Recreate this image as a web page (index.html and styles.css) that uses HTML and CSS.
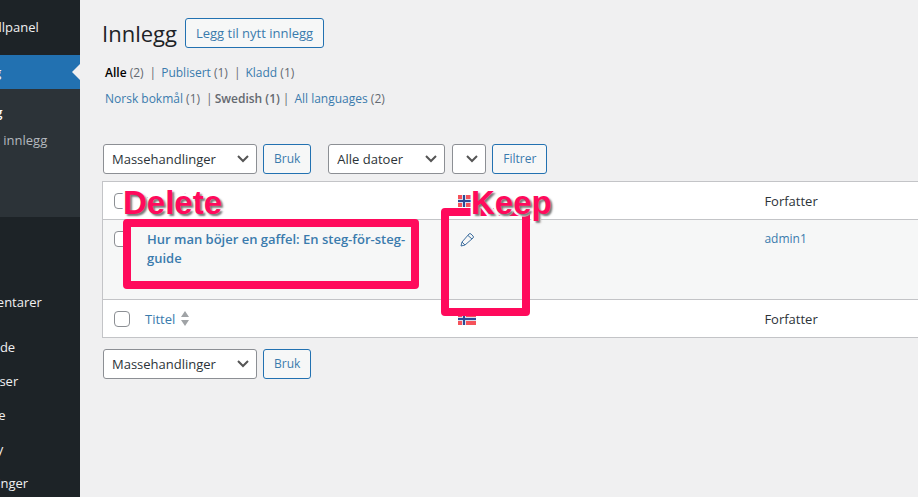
FILE: index.html
```html
<!DOCTYPE html>
<html lang="nb">
<head>
	<meta charset="UTF-8">
	<title>Innlegg</title>
	<link rel="stylesheet" href="styles.css">
</head>
<body>

<svg class="sprite" aria-hidden="true">
	<symbol id="flag-no" viewBox="0 0 18 12">
		<path fill="#f5525a" d="M0 0h18v12H0z"/>
		<path fill="#d9dcec" d="M4 0h4v12H4zM0 4h18v4H0z"/>
		<path fill="#2c4a94" d="M5 0h2v12H5zM0 5h18v2H0z"/>
	</symbol>
	<symbol id="sort" viewBox="0 0 8 15">
		<path fill="#a0a3a6" d="M0 6l4-6 4 6zM0 9l4 6 4-6z"/>
	</symbol>
</svg>

<nav class="menu">
	<ul>
		<li><a href="#">Kontrollpanel</a></li>
		<li class="menu-gap"></li>
		<li class="current">
			<a href="#">Innlegg</a>
			<ul class="submenu">
				<li class="active"><a href="#">Alle innlegg</a></li>
				<li><a href="#">Legg til nytt innlegg</a></li>
				<li><a href="#">Kategorier</a></li>
				<li><a href="#">Stikkord</a></li>
			</ul>
		</li>
		<li><a href="#">Media</a></li>
		<li><a href="#">Sider</a></li>
		<li><a href="#">Kommentarer</a></li>
		<li class="menu-gap"></li>
		<li><a href="#">Utseende</a></li>
		<li><a href="#">Utvidelser</a></li>
		<li><a href="#">Brukere</a></li>
		<li><a href="#">Verktøy</a></li>
		<li><a href="#">Innstillinger</a></li>
	</ul>
</nav>

<main class="content">
	<header class="heading">
		<h1>Innlegg</h1>
		<a class="button add-new" href="#">Legg til nytt innlegg</a>
	</header>

	<ul class="views">
		<li><a class="selected" href="#">Alle</a> (2)</li>
		<li><a href="#">Publisert</a> (1)</li>
		<li><a href="#">Kladd</a> (1)</li>
	</ul>
	<ul class="views languages">
		<li><a href="#">Norsk bokmål</a> (1)</li>
		<li class="chosen">Swedish (1)</li>
		<li><a href="#">All languages</a> (2)</li>
	</ul>

	<div class="tablenav top">
		<select class="bulk" aria-label="Velg massehandling"><option>Massehandlinger</option></select>
		<button class="button" type="button">Bruk</button>
		<select class="dates" aria-label="Filtrer etter dato"><option>Alle datoer</option></select>
		<select class="empty" aria-label="Filtrer etter kategori"><option></option></select>
		<button class="button" type="button">Filtrer</button>
	</div>

	<table class="posts">
		<thead>
			<tr>
				<th class="col-check"><input type="checkbox" aria-label="Velg alle"></th>
				<th class="col-title"><a class="sortable" href="#">Tittel <svg class="sort"><use href="#sort"/></svg></a></th>
				<th class="col-lang"><svg class="flag" role="img" aria-label="Norsk bokmål"><use href="#flag-no"/></svg></th>
				<th>Forfatter</th>
			</tr>
		</thead>
		<tbody>
			<tr>
				<td class="col-check"><input type="checkbox" aria-label="Velg innlegg"></td>
				<td class="col-title"><a class="row-title" href="#">Hur man böjer en gaffel: En steg-för-steg-guide</a></td>
				<td class="col-lang">
					<a href="#" aria-label="Rediger oversettelsen">
						<svg class="pencil" viewBox="0 0 16 16"><path d="M2 14l1-4 7-8q1-1 2 0l2 2q1 1 0 2l-8 7zM9 3.500l4 3.500M3 10l3 3"/></svg>
					</a>
				</td>
				<td><a href="#">admin1</a></td>
			</tr>
		</tbody>
		<tfoot>
			<tr>
				<th class="col-check"><input type="checkbox" aria-label="Velg alle"></th>
				<th class="col-title"><a class="sortable" href="#">Tittel <svg class="sort"><use href="#sort"/></svg></a></th>
				<th class="col-lang"><svg class="flag" role="img" aria-label="Norsk bokmål"><use href="#flag-no"/></svg></th>
				<th>Forfatter</th>
			</tr>
		</tfoot>
	</table>

	<div class="tablenav bottom">
		<select class="bulk" aria-label="Velg massehandling"><option>Massehandlinger</option></select>
		<button class="button" type="button">Bruk</button>
	</div>

	<div class="mark mark-delete"></div>
	<div class="mark mark-keep"></div>
	<span class="note note-delete">Delete</span>
	<span class="note note-keep">Keep</span>
</main>

</body>
</html>
```

FILE: styles.css
```css
* {
	box-sizing: border-box;
}

html, body {
	height: 100%;
}

body {
	display: flex;
	margin: 0;
	overflow: hidden;
	background: #f0f0f1;
	color: #3c434a;
	font-family: "Open Sans", sans-serif;
	font-size: 12px;
	line-height: 18px;
}

ul, h1 {
	margin: 0;
	padding: 0;
	list-style: none;
}

a {
	color: #3a7bad;
	text-decoration: none;
}

.sprite {
	display: none;
}

/* admin menu, partly scrolled out to the left */
.menu {
	flex: none;
	width: 160px;
	margin-left: -80px;
	padding-top: 10px;
	background: #1d2327;
	font-size: 13px;
}

.menu a {
	display: block;
	padding: 8px 0 8px 37px;
	color: #f0f0f1;
	white-space: nowrap;
}

.menu-gap {
	height: 11px;
}

.current {
	position: relative;
}

.current > a {
	background: #2271b1;
	color: #fff;
}

/* arrow pointing at the page */
.current::after {
	content: "";
	position: absolute;
	top: 9px;
	right: 0;
	border: 8px solid transparent;
	border-right-color: #f0f0f1;
}

.submenu {
	padding: 9px 0 7px;
	background: #2c3338;
}

.menu .submenu a {
	padding: 5px 0 5px 10px;
	color: #b4b9be;
}

.menu .submenu .active a {
	color: #fff;
	font-weight: 600;
}

/* page */
.content {
	position: relative;
	flex: 1;
	min-width: 0;
	padding: 18px 0 0 22px;
}

.heading {
	display: flex;
	align-items: center;
	gap: 8px;
}

h1 {
	color: #1d2327;
	font-size: 22px;
	font-weight: 400;
	line-height: 30px;
}

.button {
	height: 30px;
	padding: 0 10px;
	border: 1px solid #2271b1;
	border-radius: 3px;
	background: #f6f7f7;
	color: #3a7bad;
	font: 12px/28px "Open Sans", sans-serif;
}

.add-new {
	font-size: 13px;
}

.views {
	display: flex;
	padding: 16px 0 0 3px;
	color: #646970;
}

.languages {
	padding-top: 8px;
}

.views li + li::before {
	content: "|";
	padding: 0 5px 0 6px;
}

.views .selected {
	color: #000;
	font-weight: 600;
}

.views .chosen {
	font-weight: 600;
}

.views .chosen::before,
.views .chosen + li::before {
	font-weight: 400;
}

.languages .chosen::before {
	padding-right: 2px;
}

.languages .chosen + li::before {
	padding-left: 3px;
}

.tablenav {
	display: flex;
	gap: 6px;
	padding-left: 1px;
}

.top {
	margin: 36px 0 7px;
}

.bottom {
	margin-top: 11px;
}

select {
	height: 30px;
	padding: 0 24px 0 8px;
	appearance: none;
	border: 1px solid #8c8f94;
	border-radius: 3px;
	background: #fff url("data:image/svg+xml,%3Csvg xmlns='http://www.w3.org/2000/svg' viewBox='0 0 12 8'%3E%3Cpath d='M1 1l5 5 5-5' fill='none' stroke='%23555' stroke-width='2'/%3E%3C/svg%3E") no-repeat right 7px center / 12px 8px;
	color: #2c3338;
	font: 13px "Open Sans", sans-serif;
}

.bulk {
	width: 154px;
}

.dates {
	width: 117px;
	margin-left: 11px;
}

.empty {
	width: 34px;
	margin-left: 1px;
}

.posts {
	width: 100%;
	table-layout: fixed;
	border: solid #c3c4c7;
	border-width: 1px 0 1px 1px;
	border-spacing: 0;
	background: #fff;
}

.posts th, .posts td {
	padding: 0 10px;
	text-align: left;
	font-weight: 400;
}

.posts th {
	height: 37px;
	color: #2c3338;
	font-size: 13px;
}

.posts td {
	height: 81px;
	padding-top: 10px;
	border: solid #c3c4c7;
	border-width: 1px 0;
	background: #f6f7f7;
	vertical-align: top;
}

.posts .col-check {
	width: 32px;
	padding-right: 0;
}

.posts .col-title {
	width: 38%;
}

.posts td.col-title {
	padding-left: 12px;
	padding-right: 30px;
	font-size: 13px;
	line-height: 19px;
}

.posts .col-lang {
	width: 38%;
	padding-left: 13px;
}

.row-title {
	font-weight: 600;
}

input[type="checkbox"] {
	display: block;
	width: 16px;
	height: 16px;
	margin: 1px;
	appearance: none;
	border: 1px solid #8c8f94;
	border-radius: 4px;
	background: #fff;
}

.sortable {
	display: flex;
	align-items: center;
	gap: 6px;
}

.sort {
	width: 8px;
	height: 15px;
}

.flag {
	display: block;
	width: 18px;
	height: 12px;
}

.pencil {
	display: block;
	width: 16px;
	height: 16px;
	margin: 2px 1px;
	fill: none;
	stroke: #3f6f9f;
}

/* markings drawn over the table */
.mark {
	position: absolute;
	border: 8px solid #ff0a5c;
	border-radius: 4px;
}

.mark-delete {
	top: 219px;
	left: 43px;
	width: 296px;
	height: 70px;
}

.mark-keep {
	top: 208px;
	left: 361px;
	width: 89px;
	height: 108px;
}

.note {
	position: absolute;
	top: 185px;
	color: #ff0a5c;
	font: bold 33px/36px "Liberation Sans", Arial, sans-serif;
	-webkit-text-stroke: 5px #fff;
	paint-order: stroke fill;
	text-shadow: 2px 2px 2px #777;
}

.note-delete {
	left: 43px;
}

.note-keep {
	left: 391px;
}
```
